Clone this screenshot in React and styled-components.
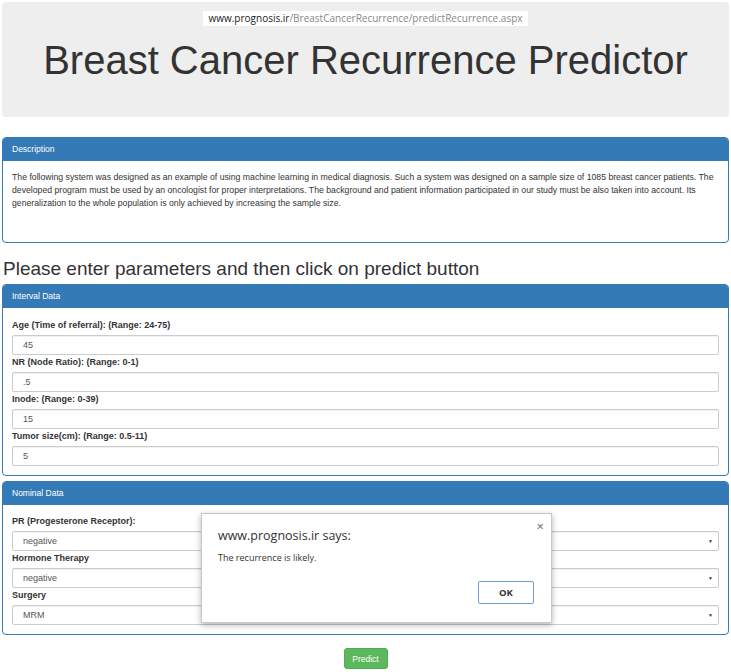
import React from "react";
import styled, { createGlobalStyle } from "styled-components";

const GlobalStyle = createGlobalStyle`
  html, body {
    margin: 0;
    padding: 0;
    background: #ffffff;
  }
  body {
    font-family: "Liberation Sans", Arial, sans-serif;
    color: #333333;
  }
`;

const Page = styled.div`
  position: relative;
  width: 731px;
  height: 672px;
  padding: 2px 2px 0;
  box-sizing: border-box;
  overflow: hidden;
`;

const Jumbotron = styled.div`
  height: 115px;
  background: #eeeeee;
  border-radius: 4px;
  display: flex;
  flex-direction: column;
  align-items: center;
  padding-top: 9px;
  box-sizing: border-box;
`;

const UrlBar = styled.div`
  background: #ffffff;
  padding: 1px 5px;
  font-family: "Open Sans", "Noto Sans", sans-serif;
  font-size: 10px;
  line-height: 13px;
  color: #888888;

  b {
    font-weight: 400;
    color: #222222;
  }
`;

const Title = styled.h1`
  margin: 11px 0 0;
  font-family: "Liberation Sans", Arial, sans-serif;
  font-weight: 400;
  font-size: 40px;
  line-height: 46px;
  color: #333333;
`;

const Panel = styled.div`
  margin-top: ${(p) => p.$top}px;
  border: 1px solid #337ab7;
  border-radius: 4px;
  background: #ffffff;
  overflow: hidden;
`;

const PanelHeading = styled.div`
  height: 23px;
  background: #337ab7;
  color: #ffffff;
  font-size: 8.5px;
  line-height: 23px;
  padding-left: 9px;
`;

const DescBody = styled.div`
  height: 81px;
  padding: 10px 10px 0 9px;
  box-sizing: border-box;
  font-size: 8.7px;
  line-height: 13px;
  color: #333333;
`;

const Lead = styled.h3`
  margin: 14px 0 0 1px;
  font-family: "Liberation Sans", Arial, sans-serif;
  font-weight: 400;
  font-size: 19px;
  line-height: 24px;
  color: #333333;
`;

const FormBody = styled.div`
  padding: ${(p) => p.$pt}px 9px 9px 9px;
`;

const Label = styled.div`
  font-weight: 700;
  font-size: 9px;
  line-height: 14px;
  margin-bottom: 3px;
  color: #333333;
`;

const Field = styled.div`
  position: relative;
  height: 20px;
  border: 1px solid #cccccc;
  border-radius: 2px;
  box-sizing: border-box;
  padding-left: 10px;
  font-size: 9px;
  line-height: 18px;
  color: #555555;
  box-shadow: inset 0 1px 1px rgba(0, 0, 0, 0.06);
`;

const Caret = styled.span`
  position: absolute;
  right: 5px;
  top: 0;
  font-size: 5px;
  color: #333333;
`;

const Footer = styled.div`
  display: flex;
  justify-content: center;
  padding-top: 13px;
`;

const PredictButton = styled.button`
  width: 44px;
  height: 21px;
  border: 1px solid #4cae4c;
  border-radius: 3px;
  background: #5cb85c;
  color: #ffffff;
  font-family: "Liberation Sans", Arial, sans-serif;
  font-size: 8.5px;
  padding: 0;
`;

const Dialog = styled.div`
  position: absolute;
  left: 201px;
  top: 513px;
  width: 351px;
  height: 110px;
  box-sizing: border-box;
  background: #ffffff;
  border: 1px solid #c8c8c8;
  box-shadow: 0 2px 6px rgba(0, 0, 0, 0.3);
  padding: 13px 16px 0 16px;
  font-family: "Open Sans", "Noto Sans", sans-serif;
`;

const DialogTitle = styled.div`
  font-size: 12.5px;
  line-height: 18px;
  color: #333333;
`;

const DialogText = styled.div`
  margin-top: 6px;
  font-size: 9px;
  line-height: 13px;
  color: #333333;
`;

const DialogActions = styled.div`
  display: flex;
  justify-content: flex-end;
  margin-top: 17px;
  padding-right: 1px;
`;

const OkButton = styled.button`
  width: 56px;
  height: 23px;
  background: #ffffff;
  border: 1px solid #6e9ed8;
  border-radius: 2px;
  font-family: "Open Sans", "Noto Sans", sans-serif;
  font-weight: 700;
  font-size: 9.5px;
  color: #333333;
  padding: 0;
`;

const Close = styled.span`
  position: absolute;
  right: 7px;
  top: 3px;
  font-size: 13px;
  color: #666666;
`;

const intervalFields = [
  ["Age (Time of referral): (Range: 24-75)", "45"],
  ["NR (Node Ratio): (Range: 0-1)", ".5"],
  ["Inode: (Range: 0-39)", "15"],
  ["Tumor size(cm): (Range: 0.5-11)", "5"],
];

const nominalFields = [
  ["PR (Progesterone Receptor):", "negative"],
  ["Hormone Therapy", "negative"],
  ["Surgery", "MRM"],
];

const App = () => {
  return (
    <Page>
      <GlobalStyle />
      <Jumbotron>
        <UrlBar>
          <b>www.prognosis.ir</b>/BreastCancerRecurrence/predictRecurrence.aspx
        </UrlBar>
        <Title>Breast Cancer Recurrence Predictor</Title>
      </Jumbotron>

      <Panel $top={20}>
        <PanelHeading>Description</PanelHeading>
        <DescBody>
          The following system was designed as an example of using machine
          learning in medical diagnosis. Such a system was designed on a sample
          size of 1085 breast cancer patients. The developed program must be
          used by an oncologist for proper interpretations. The background and
          patient information participated in our study must be also taken into
          account. Its generalization to the whole population is only achieved
          by increasing the sample size.
        </DescBody>
      </Panel>

      <Lead>Please enter parameters and then click on predict button</Lead>

      <Panel $top={3}>
        <PanelHeading>Interval Data</PanelHeading>
        <FormBody $pt={10}>
          {intervalFields.map(([label, value]) => (
            <div key={label}>
              <Label>{label}</Label>
              <Field>{value}</Field>
            </div>
          ))}
        </FormBody>
      </Panel>

      <Panel $top={5}>
        <PanelHeading>Nominal Data</PanelHeading>
        <FormBody $pt={9}>
          {nominalFields.map(([label, value]) => (
            <div key={label}>
              <Label>{label}</Label>
              <Field>
                {value}
                <Caret>▼</Caret>
              </Field>
            </div>
          ))}
        </FormBody>
      </Panel>

      <Footer>
        <PredictButton>Predict</PredictButton>
      </Footer>

      <Dialog>
        <Close>×</Close>
        <DialogTitle>www.prognosis.ir says:</DialogTitle>
        <DialogText>The recurrence is likely.</DialogText>
        <DialogActions>
          <OkButton>OK</OkButton>
        </DialogActions>
      </Dialog>
    </Page>
  );
};

export default App;
